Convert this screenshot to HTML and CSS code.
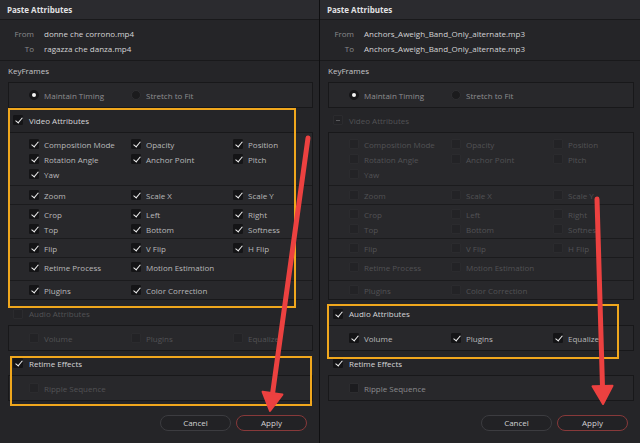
FILE: index.html
```html
<!DOCTYPE html>
<html lang="en">
<head>
<meta charset="utf-8">
<title>Paste Attributes</title>
<link rel="stylesheet" href="styles.css">
</head>
<body>
<div class="screen">
  <section class="panel left">
    <header class="title">Paste Attributes</header>
    <div class="files">
      <div class="frow"><span class="fl">From</span><span class="fv">donne che corrono.mp4</span></div>
      <div class="frow"><span class="fl">To</span><span class="fv">ragazza che danza.mp4</span></div>
    </div>
    <div class="sect-title">KeyFrames</div>
    <div class="box radios">
      <div class="item"><span class="radio on"></span><span class="rl">Maintain Timing</span></div>
      <div class="item"><span class="radio"></span><span class="rl">Stretch to Fit</span></div>
    </div>
    <div class="head"><span class="cb on"></span><span>Video Attributes</span></div>
    <div class="box video">
      <div class="grp g1">
        <div class="item"><span class="cb on"></span>Composition Mode</div>
        <div class="item"><span class="cb on"></span>Opacity</div>
        <div class="item"><span class="cb on"></span>Position</div>
        <div class="item"><span class="cb on"></span>Rotation Angle</div>
        <div class="item"><span class="cb on"></span>Anchor Point</div>
        <div class="item"><span class="cb on"></span>Pitch</div>
        <div class="item"><span class="cb on"></span>Yaw</div>
      </div>
      <div class="grp">
        <div class="item"><span class="cb on"></span>Zoom</div>
        <div class="item"><span class="cb on"></span>Scale X</div>
        <div class="item"><span class="cb on"></span>Scale Y</div>
      </div>
      <div class="grp">
        <div class="item"><span class="cb on"></span>Crop</div>
        <div class="item"><span class="cb on"></span>Left</div>
        <div class="item"><span class="cb on"></span>Right</div>
        <div class="item"><span class="cb on"></span>Top</div>
        <div class="item"><span class="cb on"></span>Bottom</div>
        <div class="item"><span class="cb on"></span>Softness</div>
      </div>
      <div class="grp">
        <div class="item"><span class="cb on"></span>Flip</div>
        <div class="item"><span class="cb on"></span>V Flip</div>
        <div class="item"><span class="cb on"></span>H Flip</div>
      </div>
      <div class="grp g5">
        <div class="item"><span class="cb on"></span>Retime Process</div>
        <div class="item"><span class="cb on"></span>Motion Estimation</div>
      </div>
      <div class="grp">
        <div class="item"><span class="cb on"></span>Plugins</div>
        <div class="item"><span class="cb on"></span>Color Correction</div>
      </div>
    </div>
    <div class="head dim"><span class="cb"></span><span>Audio Attributes</span></div>
    <div class="box single dim">
      <div class="grp">
        <div class="item"><span class="cb"></span>Volume</div>
        <div class="item"><span class="cb"></span>Plugins</div>
        <div class="item"><span class="cb"></span>Equalizer</div>
      </div>
    </div>
    <div class="head"><span class="cb on"></span><span>Retime Effects</span></div>
    <div class="box single dim">
      <div class="grp">
        <div class="item"><span class="cb"></span>Ripple Sequence</div>
      </div>
    </div>
    <div class="actions">
      <button class="btn">Cancel</button>
      <button class="btn apply">Apply</button>
    </div>
  </section>

  <div class="divider"></div>

  <section class="panel right">
    <header class="title">Paste Attributes</header>
    <div class="files">
      <div class="frow"><span class="fl">From</span><span class="fv">Anchors_Aweigh_Band_Only_alternate.mp3</span></div>
      <div class="frow"><span class="fl">To</span><span class="fv">Anchors_Aweigh_Band_Only_alternate.mp3</span></div>
    </div>
    <div class="sect-title">KeyFrames</div>
    <div class="box radios">
      <div class="item"><span class="radio on"></span><span class="rl">Maintain Timing</span></div>
      <div class="item"><span class="radio"></span><span class="rl">Stretch to Fit</span></div>
    </div>
    <div class="head dim"><span class="cb mixed"></span><span>Video Attributes</span></div>
    <div class="box video dim">
      <div class="grp g1">
        <div class="item"><span class="cb"></span>Composition Mode</div>
        <div class="item"><span class="cb"></span>Opacity</div>
        <div class="item"><span class="cb"></span>Position</div>
        <div class="item"><span class="cb"></span>Rotation Angle</div>
        <div class="item"><span class="cb"></span>Anchor Point</div>
        <div class="item"><span class="cb"></span>Pitch</div>
        <div class="item"><span class="cb"></span>Yaw</div>
      </div>
      <div class="grp">
        <div class="item"><span class="cb"></span>Zoom</div>
        <div class="item"><span class="cb"></span>Scale X</div>
        <div class="item"><span class="cb"></span>Scale Y</div>
      </div>
      <div class="grp">
        <div class="item"><span class="cb"></span>Crop</div>
        <div class="item"><span class="cb"></span>Left</div>
        <div class="item"><span class="cb"></span>Right</div>
        <div class="item"><span class="cb"></span>Top</div>
        <div class="item"><span class="cb"></span>Bottom</div>
        <div class="item"><span class="cb"></span>Softness</div>
      </div>
      <div class="grp">
        <div class="item"><span class="cb"></span>Flip</div>
        <div class="item"><span class="cb"></span>V Flip</div>
        <div class="item"><span class="cb"></span>H Flip</div>
      </div>
      <div class="grp g5">
        <div class="item"><span class="cb"></span>Retime Process</div>
        <div class="item"><span class="cb"></span>Motion Estimation</div>
      </div>
      <div class="grp">
        <div class="item"><span class="cb"></span>Plugins</div>
        <div class="item"><span class="cb"></span>Color Correction</div>
      </div>
    </div>
    <div class="head"><span class="cb on"></span><span>Audio Attributes</span></div>
    <div class="box single">
      <div class="grp">
        <div class="item"><span class="cb on"></span>Volume</div>
        <div class="item"><span class="cb on"></span>Plugins</div>
        <div class="item"><span class="cb on"></span>Equalizer</div>
      </div>
    </div>
    <div class="head"><span class="cb on"></span><span>Retime Effects</span></div>
    <div class="box single">
      <div class="grp">
        <div class="item soft"><span class="cb"></span>Ripple Sequence</div>
      </div>
    </div>
    <div class="actions">
      <button class="btn">Cancel</button>
      <button class="btn apply">Apply</button>
    </div>
  </section>

  <div class="hl hl-video"></div>
  <div class="hl hl-retime"></div>
  <div class="hl hl-audio"></div>

  <svg class="arrows" width="640" height="443" viewBox="0 0 640 443">
    <g fill="#ec4140" stroke="#ec4140" stroke-linecap="round" stroke-linejoin="round">
      <line x1="308" y1="138" x2="272.5" y2="394" stroke-width="5"/>
      <polygon points="270,411 262.6,391.8 282.4,394.6" stroke-width="2"/>
      <line x1="597" y1="199" x2="602.5" y2="387" stroke-width="5"/>
      <polygon points="603,404 592.5,386.3 612.5,385.7" stroke-width="2"/>
    </g>
  </svg>
</div>
</body>
</html>
```

FILE: styles.css
```css
* { box-sizing: border-box; }
html, body { margin: 0; padding: 0; }
body {
  background: #1f1f22;
  font-family: "Open Sans", "Noto Sans", sans-serif;
  font-size: 8px;
  color: #b8b8ba;
}
.screen {
  position: relative;
  width: 640px;
  height: 443px;
  display: flex;
  overflow: hidden;
}
.panel {
  display: flex;
  flex-direction: column;
  background: #252528;
  height: 443px;
}
.panel.left { width: 319px; }
.panel.right { width: 320px; }
.divider { width: 1px; background: #0f0f11; }

.title {
  height: 20px;
  line-height: 19px;
  padding-left: 7px;
  font-weight: 700;
  color: #e2e2e4;
  background: #2b2b2f;
  border-bottom: 1px solid #19191b;
}
.files {
  padding: 6px 0 4px;
  border-bottom: 1px solid #19191b;
  height: 41px;
}
.frow {
  display: flex;
  height: 15px;
  align-items: center;
}
.fl {
  width: 34px;
  text-align: right;
  color: #8a8a8d;
}
.fv {
  margin-left: 10px;
  color: #d4d4d6;
  white-space: nowrap;
}
.sect-title {
  height: 21px;
  line-height: 20px;
  padding-left: 8px;
  color: #c6c6c8;
}
.box {
  margin: 0 6px 0 8px;
  border: 1px solid #18181a;
  background: #28282b;
}
.radios {
  height: 26px;
  display: flex;
  align-items: center;
  padding-left: 20px;
}
.radios .item { width: 102px; }
.rl { color: #8e8e91; }

.item {
  display: flex;
  align-items: center;
  gap: 5px;
  height: 15px;
  white-space: nowrap;
}
.radio {
  width: 10px;
  height: 10px;
  border-radius: 50%;
  background: #1b1b1d;
  border: 1px solid #2e2e31;
  position: relative;
  flex: none;
}
.radio.on { background: #161618; border-color: #161618; }
.radio.on::after {
  content: "";
  position: absolute;
  left: 2px; top: 2px;
  width: 4px; height: 4px;
  border-radius: 50%;
  background: #f4f4f4;
}
.cb {
  width: 10px;
  height: 10px;
  flex: none;
  border-radius: 1px;
  background: #202023;
  border: 1px solid #303033;
  position: relative;
}
.cb.on {
  background: #141416;
  border-color: #141416;
}
.cb.on::after {
  content: "";
  position: absolute;
  left: 2.5px;
  top: 0px;
  width: 3px;
  height: 6px;
  border-right: 1.8px solid #f2f2f2;
  border-bottom: 1.8px solid #f2f2f2;
  transform: rotate(40deg);
}
.cb.mixed::after {
  content: "";
  position: absolute;
  left: 2px; top: 3.5px;
  width: 4px; height: 1px;
  background: #5a5a5d;
}
.head {
  height: 24px;
  display: flex;
  align-items: center;
  gap: 6px;
  padding-left: 13px;
  color: #d6d6d8;
}
.video { margin-bottom: 2px; }
.video + .head { height: 23px; }

.grp {
  display: grid;
  grid-template-columns: 102px 102px 1fr;
  padding: 1.5px 0 1.5px 20px;
  border-top: 1px solid #1b1b1d;
}
.grp:first-child { border-top: none; }
.grp.g1 { padding-top: 3.5px; padding-bottom: 3.5px; }
.grp.g5 { padding-bottom: 5.5px; }
.single { height: 26px; }
.single .grp { padding-top: 4.5px; }

.dim, .dim .item, .head.dim { color: #525255; }
.dim .cb { background: #232326; border-color: #2b2b2e; }
.soft { color: #8a8a8d; }
.soft .cb { background: #1c1c1f; border-color: #2c2c2f; }

.actions {
  display: flex;
  justify-content: flex-end;
  gap: 5px;
  padding: 14px 12px 0 0;
}
.btn {
  width: 71px;
  height: 16px;
  border-radius: 8px;
  border: 1px solid #3c3c40;
  background: #222225;
  color: #d2d2d4;
  font-family: "Open Sans", "Noto Sans", sans-serif;
  font-size: 8px;
  padding: 0;
  line-height: 14px;
}
.btn.apply { border-color: #87393a; }
.right .actions { padding-right: 12px; }

.hl {
  position: absolute;
  border: 2px solid #f0a71d;
  pointer-events: none;
}
.hl-video { left: 8px; top: 108px; width: 288px; height: 200px; }
.hl-retime { left: 10px; top: 356px; width: 302px; height: 50px; }
.hl-audio { left: 327px; top: 304px; width: 292px; height: 55px; }

.arrows {
  position: absolute;
  left: 0;
  top: 0;
  pointer-events: none;
}
```
